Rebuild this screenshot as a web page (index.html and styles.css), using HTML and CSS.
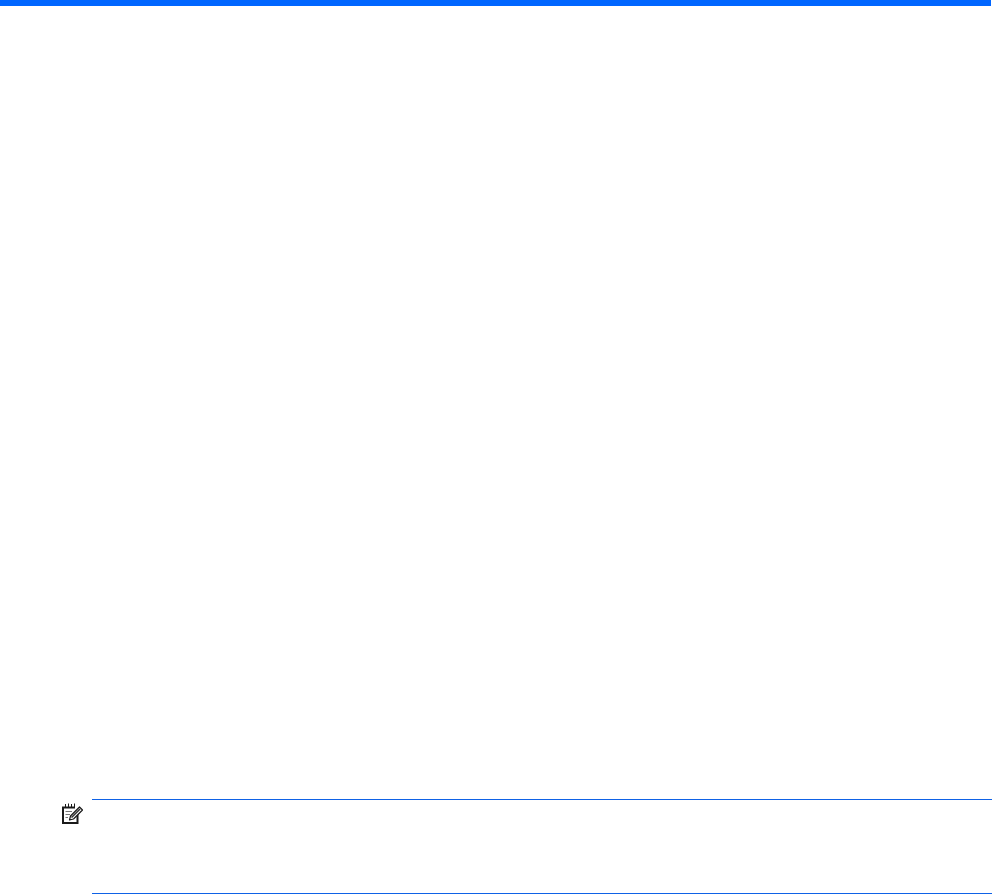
FILE: index.html
```html
<!DOCTYPE html>
<html lang="en">
<head>
<meta charset="utf-8">
<title>Note</title>
<link rel="stylesheet" href="styles.css">
</head>
<body>
<div class="page">
  <header class="top-bar"></header>
  <main class="content">
    <section class="note">
      <svg class="note-icon" viewBox="0 0 21 21" width="21" height="21" aria-hidden="true">
        <path class="ico-pad" d="M13 4.500H1V20H15.500V10"/>
        <path class="ico-rings" d="M3.500 1V5M6.500 0.500V5M9.500 1V5M12.500 0.500V4"/>
        <path class="ico-lines" d="M3.500 8.500H10M3.500 11.500H8M3.500 14.500H6"/>
        <path class="ico-pen" d="M7.500 17L8.500 13L17.500 4L20.500 7L11.500 16L7.500 17Z"/>
        <path class="ico-core" d="M9.500 14.500L18 6"/>
      </svg>
      <div class="note-body"></div>
    </section>
  </main>
</div>
</body>
</html>
```
FILE: styles.css
```css
html, body {
  margin: 0;
  padding: 0;
  background: #ffffff;
}

.page {
  display: flex;
  flex-direction: column;
  height: 894px;
  overflow: hidden;
  font-family: "Liberation Sans", Arial, sans-serif;
}

.top-bar {
  height: 6px;
  margin-right: 1px;
  background: #0066ff;
  flex: none;
}

.content {
  flex: 1;
  display: flex;
  flex-direction: column;
  justify-content: flex-end;
  padding-left: 62px;
}

.note {
  display: grid;
  grid-template-columns: 21px 1fr;
  column-gap: 9px;
  height: 95px;
}

.note-icon {
  margin-top: 4px;
}

.note-body {
  border-top: 1px solid #0f62e6;
  border-bottom: 1px solid #0f62e6;
}

.ico-pad,
.ico-rings,
.ico-lines,
.ico-pen,
.ico-core {
  fill: none;
  stroke: #1a1a1a;
}

.ico-pad {
  stroke-width: 2;
}

.ico-rings {
  stroke-width: 1;
}

.ico-lines {
  stroke-width: 1;
  stroke: #777777;
}

.ico-pen {
  fill: #ffffff;
  stroke-width: 1.2;
  stroke-linejoin: round;
}

.ico-core {
  stroke-width: 1.6;
  stroke: #333333;
}
```
